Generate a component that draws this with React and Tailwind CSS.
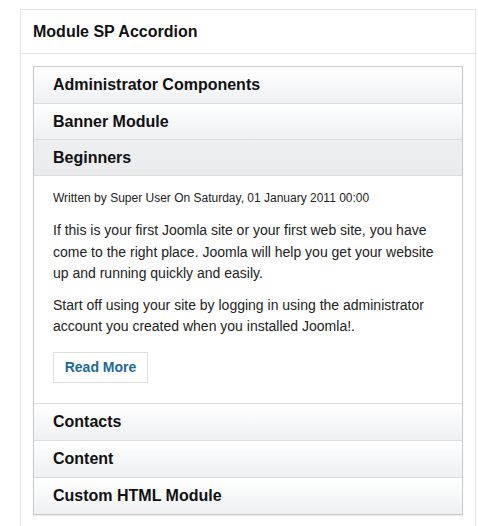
import React, { useState } from 'react';

const items = [
  'Administrator Components',
  'Banner Module',
  'Beginners',
  'Contacts',
  'Content',
  'Custom HTML Module',
];

const App = () => {
  const [open, setOpen] = useState('Beginners');

  return (
    <div className="h-screen overflow-hidden bg-white pt-[9px] pl-[20px] font-['Liberation_Sans',Arial,sans-serif] text-[#222]">
      <div className="w-[456px] h-[517px] border border-b-0 border-[#e4e4e4]">
        <div className="h-[44px] border-b border-[#e4e4e4] flex items-center pl-[12px]">
          <h3 className="text-[16px] font-bold text-[#111]">Module SP Accordion</h3>
        </div>
        <div className="p-[12px]">
          <div className="w-[430px] border border-[#c9c9c9] shadow-[0_1px_1px_rgba(0,0,0,0.08)]">
            {items.map((name, i) => (
              <div key={name}>
                <button
                  onClick={() => setOpen(open === name ? '' : name)}
                  className={`w-full ${i > 2 ? 'h-[37px]' : 'h-[36px]'} flex items-center pl-[19px] text-left text-[16px] font-bold text-[#111] ${i > 0 ? 'border-t border-[#dcdcdc]' : ''} ${open === name ? 'bg-gradient-to-b from-[#edeff1] to-[#e9ebed]' : 'bg-gradient-to-b from-white to-[#eef0f2]'}`}
                >
                  {name}
                </button>
                {open === name && (
                  <div className="border-t border-[#dcdcdc] pl-[19px] pr-[16px] pt-[14px] pb-[20px]">
                    <p className="text-[12px] text-[#222] leading-[16px]">Written by Super User On Saturday, 01 January 2011 00:00</p>
                    <p className="mt-[14px] text-[14px] leading-[21.5px]">
                      If this is your first Joomla site or your first web site, you have come to the right place. Joomla will help you get your website up and running quickly and easily.
                    </p>
                    <p className="mt-[10px] text-[14px] leading-[21.5px]">
                      Start off using your site by logging in using the administrator account you created when you installed Joomla!.
                    </p>
                    <a href="#" className="mt-[14px] inline-flex items-center justify-center w-[95px] h-[31px] border border-[#dedede] text-[14px] font-bold text-[#1f6996]">
                      Read More
                    </a>
                  </div>
                )}
              </div>
            ))}
          </div>
        </div>
      </div>
    </div>
  );
};

export default App;
